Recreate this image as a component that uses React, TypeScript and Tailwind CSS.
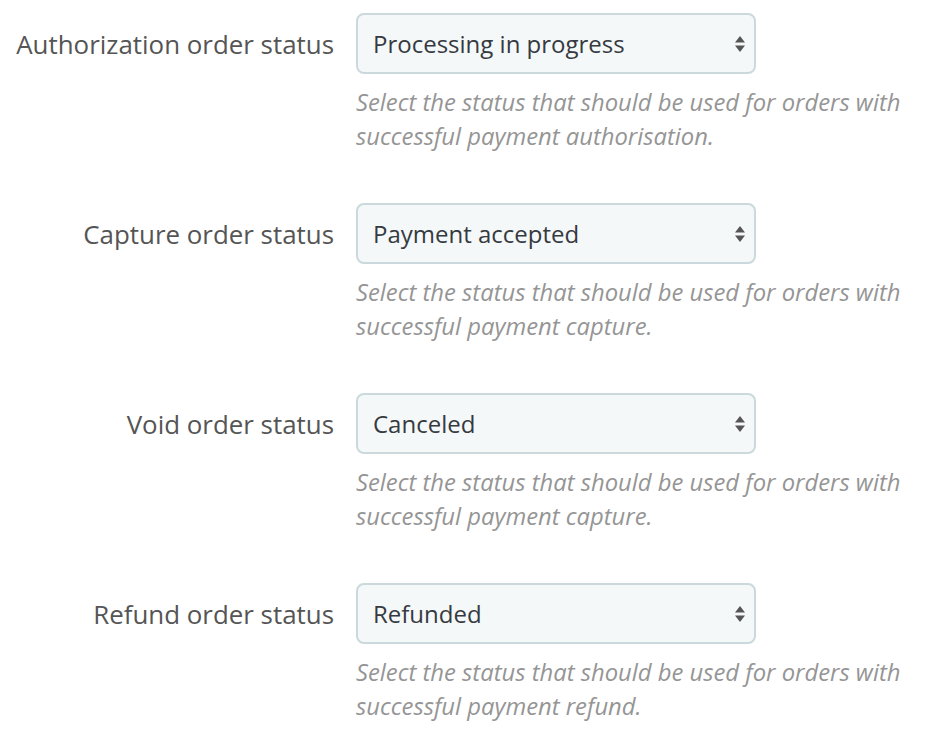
import React from "react";

const rows = [
  {
    label: "Authorization order status",
    value: "Processing in progress",
    help: "Select the status that should be used for orders with successful payment authorisation.",
  },
  {
    label: "Capture order status",
    value: "Payment accepted",
    help: "Select the status that should be used for orders with successful payment capture.",
  },
  {
    label: "Void order status",
    value: "Canceled",
    help: "Select the status that should be used for orders with successful payment capture.",
  },
  {
    label: "Refund order status",
    value: "Refunded",
    help: "Select the status that should be used for orders with successful payment refund.",
  },
];

function SortArrows() {
  return (
    <svg width="12" height="18" viewBox="0 0 12 18" className="shrink-0">
      <path d="M6 1 L11 7.5 L1 7.5 Z" fill="#555" />
      <path d="M6 17 L11 10.5 L1 10.5 Z" fill="#555" />
    </svg>
  );
}

export default function App() {
  return (
    <div
      className="w-[934px] h-[746px] bg-white pt-[13px]"
      style={{ fontFamily: '"Open Sans", "Noto Sans", sans-serif' }}
    >
      <div className="flex flex-col gap-[50px]">
        {rows.map((row) => (
          <div key={row.label} className="flex">
            <div className="w-[334px] h-[63px] flex items-center justify-end text-[25.9px] text-[#555555] whitespace-nowrap">
              {row.label}
            </div>
            <div className="ml-[22px] flex flex-col">
              <div className="w-[400px] h-[61px] rounded-[8px] border-2 border-[#cbd9dd] bg-[#f5f8f9] flex items-center justify-between pl-[15px] pr-[8px] text-[24px] text-[#363a41]">
                <span>{row.value}</span>
                <SortArrows />
              </div>
              <p className="mt-[11px] w-[575px] text-[23.8px] leading-[34px] italic text-[#959595]">
                {row.help}
              </p>
            </div>
          </div>
        ))}
      </div>
    </div>
  );
}
